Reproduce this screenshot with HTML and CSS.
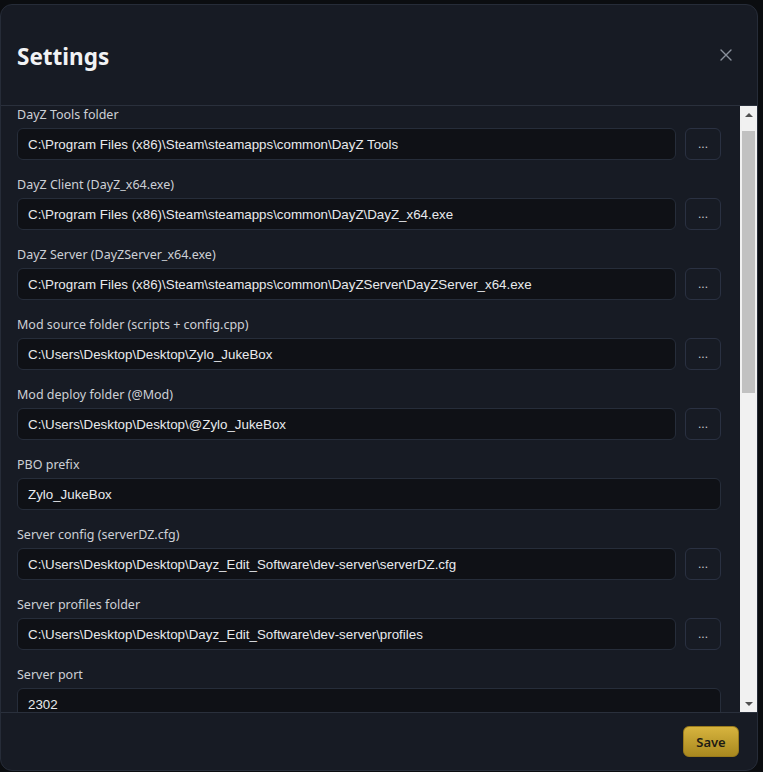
FILE: index.html
```html
<!DOCTYPE html>
<html lang="en">
<head>
    <meta charset="UTF-8">
    <meta name="viewport" content="width=device-width, initial-scale=1.0">
    <title>Settings</title>
    <link rel="stylesheet" href="styles.css">
</head>
<body>

    <div class="modal">
        <header class="modal-header">
            <h1>Settings</h1>
            <button class="close-button" aria-label="Close">
                <svg width="12" height="12" viewBox="0 0 12 12">
                    <path d="M1 1L11 11M11 1L1 11" stroke="currentColor" stroke-width="1.4" stroke-linecap="round"/>
                </svg>
            </button>
        </header>

        <div class="modal-body">
            <div class="fields">
                <div class="field">
                    <label>DayZ Tools folder</label>
                    <div class="input-row">
                        <input type="text" value="C:\Program Files (x86)\Steam\steamapps\common\DayZ Tools">
                        <button class="browse-button">...</button>
                    </div>
                </div>
                <div class="field">
                    <label>DayZ Client (DayZ_x64.exe)</label>
                    <div class="input-row">
                        <input type="text" value="C:\Program Files (x86)\Steam\steamapps\common\DayZ\DayZ_x64.exe">
                        <button class="browse-button">...</button>
                    </div>
                </div>
                <div class="field">
                    <label>DayZ Server (DayZServer_x64.exe)</label>
                    <div class="input-row">
                        <input type="text" value="C:\Program Files (x86)\Steam\steamapps\common\DayZServer\DayZServer_x64.exe">
                        <button class="browse-button">...</button>
                    </div>
                </div>
                <div class="field">
                    <label>Mod source folder (scripts + config.cpp)</label>
                    <div class="input-row">
                        <input type="text" value="C:\Users\Desktop\Desktop\Zylo_JukeBox">
                        <button class="browse-button">...</button>
                    </div>
                </div>
                <div class="field">
                    <label>Mod deploy folder (@Mod)</label>
                    <div class="input-row">
                        <input type="text" value="C:\Users\Desktop\Desktop\@Zylo_JukeBox">
                        <button class="browse-button">...</button>
                    </div>
                </div>
                <div class="field">
                    <label>PBO prefix</label>
                    <div class="input-row">
                        <input type="text" value="Zylo_JukeBox">
                    </div>
                </div>
                <div class="field">
                    <label>Server config (serverDZ.cfg)</label>
                    <div class="input-row">
                        <input type="text" value="C:\Users\Desktop\Desktop\Dayz_Edit_Software\dev-server\serverDZ.cfg">
                        <button class="browse-button">...</button>
                    </div>
                </div>
                <div class="field">
                    <label>Server profiles folder</label>
                    <div class="input-row">
                        <input type="text" value="C:\Users\Desktop\Desktop\Dayz_Edit_Software\dev-server\profiles">
                        <button class="browse-button">...</button>
                    </div>
                </div>
                <div class="field">
                    <label>Server port</label>
                    <div class="input-row">
                        <input type="text" value="2302">
                    </div>
                </div>
            </div>

            <div class="scrollbar">
                <span class="arrow arrow-up"></span>
                <div class="track"><div class="thumb"></div></div>
                <span class="arrow arrow-down"></span>
            </div>
        </div>

        <footer class="modal-footer">
            <button class="save-button">Save</button>
        </footer>
    </div>

</body>
</html>
```

FILE: styles.css
```css
* {
    margin: 0;
    padding: 0;
    box-sizing: border-box;
}

body {
    font-family: "Noto Sans", "Open Sans", sans-serif;
    background: #0b0d10;
    padding-top: 4px;
    height: 772px;
    overflow: hidden;
}

.modal {
    width: 758px;
    height: 767px;
    background: #171b24;
    border: 1px solid #262c38;
    border-radius: 12px;
    display: flex;
    flex-direction: column;
    overflow: hidden;
}

.modal-header {
    height: 101px;
    flex-shrink: 0;
    display: flex;
    align-items: center;
    justify-content: space-between;
    padding: 0 25px 0 16px;
    border-bottom: 1px solid #2a303c;
}

.modal-header h1 {
    font-size: 22.5px;
    font-weight: 700;
    color: #f1f2f4;
    margin-top: 2px;
}

.close-button {
    background: none;
    border: none;
    color: #8a919c;
    width: 12px;
    height: 12px;
    display: flex;
    cursor: pointer;
}

.modal-body {
    flex: 1;
    display: flex;
    min-height: 0;
}

.fields {
    flex: 1;
    overflow: hidden;
    padding: 1px 19px 0 16px;
    display: flex;
    flex-direction: column;
    gap: 17px;
}

.field label {
    display: block;
    font-size: 12.5px;
    line-height: 16px;
    color: #cdd0d6;
    margin-bottom: 5px;
}

.input-row {
    display: flex;
    gap: 9px;
    height: 32px;
    flex-shrink: 0;
}

.input-row input {
    flex: 1;
    min-width: 0;
    height: 32px;
    background: #0f1116;
    border: 1px solid #262d3a;
    border-radius: 6px;
    padding: 0 10px;
    font-family: "Liberation Sans", Arial, sans-serif;
    font-size: 13.33px;
    color: #e8eaed;
    outline: none;
}

.browse-button {
    width: 36px;
    height: 32px;
    flex-shrink: 0;
    background: transparent;
    border: 1px solid #2a3142;
    border-radius: 6px;
    color: #c9cdd4;
    font-family: "Liberation Sans", Arial, sans-serif;
    font-size: 12px;
    cursor: pointer;
}

.scrollbar {
    width: 17px;
    flex-shrink: 0;
    background: #f1f1f1;
    display: flex;
    flex-direction: column;
    align-items: center;
}

.arrow {
    width: 17px;
    height: 17px;
    flex-shrink: 0;
    display: flex;
    align-items: center;
    justify-content: center;
}

.arrow::before {
    content: "";
    border-left: 4px solid transparent;
    border-right: 4px solid transparent;
}

.arrow-up::before {
    border-bottom: 4px solid #505050;
}

.arrow-down::before {
    border-top: 4px solid #505050;
}

.track {
    flex: 1;
    width: 100%;
    padding: 8px 2px 0;
}

.thumb {
    height: 262px;
    background: #c1c1c1;
}

.modal-footer {
    height: 58px;
    flex-shrink: 0;
    border-top: 1px solid #2a303c;
    display: flex;
    justify-content: flex-end;
    align-items: center;
    padding: 0 18px 0 16px;
}

.save-button {
    width: 56px;
    height: 31px;
    border: 1px solid #9a7b1c;
    border-radius: 6px;
    background: linear-gradient(#d7b43e, #a9881f);
    color: #1d1b14;
    font-family: "Noto Sans", "Open Sans", sans-serif;
    font-size: 13px;
    font-weight: 600;
    cursor: pointer;
}
```
